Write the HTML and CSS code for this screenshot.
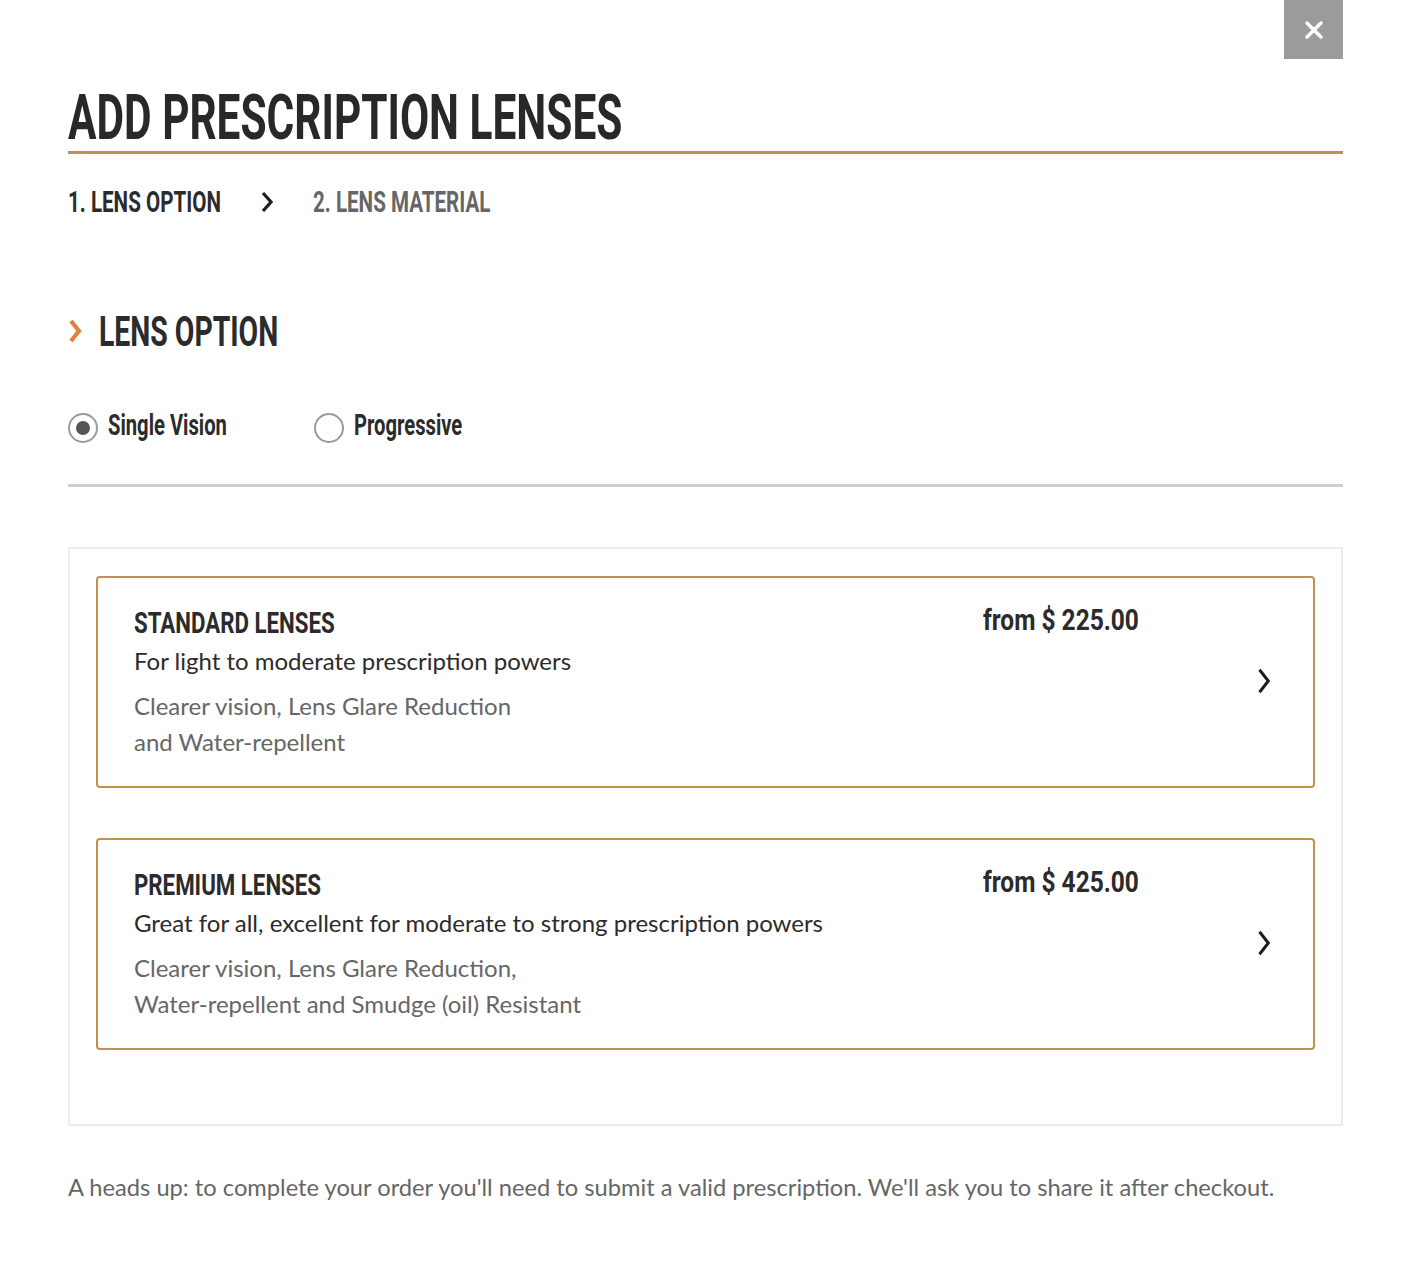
FILE: index.html
```html
<!DOCTYPE html>
<html lang="en">
<head>
<meta charset="utf-8">
<title>Add Prescription Lenses</title>
<link rel="stylesheet" href="styles.css">
</head>
<body>
<div class="modal">
  <button class="close" aria-label="Close">
    <svg width="20" height="20" viewBox="0 0 20 20"><path d="M3 3 L17 17 M17 3 L3 17" stroke="#fff" stroke-width="3.4" stroke-linecap="round"/></svg>
  </button>
  <h1 class="title"><span class="cond">ADD PRESCRIPTION LENSES</span></h1>
  <nav class="steps">
    <span class="step step-1"><span class="cond">1. LENS OPTION</span></span>
    <svg class="step-chev" width="12" height="22" viewBox="0 0 12 22"><path d="M2 2 L10 11 L2 20" fill="none" stroke="#1e1e1e" stroke-width="3.2"/></svg>
    <span class="step"><span class="cond">2. LENS MATERIAL</span></span>
  </nav>
  <h2 class="section">
    <svg class="section-chev" width="14" height="26" viewBox="0 0 14 26"><path d="M3 3 L11 13 L3 23" fill="none" stroke="#e08040" stroke-width="4.2"/></svg>
    <span class="cond">LENS OPTION</span>
  </h2>
  <div class="options">
    <label class="radio"><span class="dot checked"></span><span class="radio-label cond">Single Vision</span></label>
    <label class="radio"><span class="dot"></span><span class="radio-label cond">Progressive</span></label>
  </div>
  <hr class="divider">
  <div class="panel">
    <div class="card">
      <div class="card-body">
        <div class="card-title"><span class="cond">STANDARD LENSES</span></div>
        <div class="card-sub">For light to moderate prescription powers</div>
        <div class="card-feat">Clearer vision, Lens Glare Reduction<br>and Water-repellent</div>
      </div>
      <div class="price"><span class="cond">from $ 225.00</span></div>
      <svg class="card-chev" width="14" height="26" viewBox="0 0 14 26"><path d="M2.5 1.8 L11.3 13 L2.5 24.2" fill="none" stroke="#1e1e1e" stroke-width="3"/></svg>
    </div>
    <div class="card">
      <div class="card-body">
        <div class="card-title"><span class="cond">PREMIUM LENSES</span></div>
        <div class="card-sub">Great for all, excellent for moderate to strong prescription powers</div>
        <div class="card-feat">Clearer vision, Lens Glare Reduction,<br>Water-repellent and Smudge (oil) Resistant</div>
      </div>
      <div class="price"><span class="cond">from $ 425.00</span></div>
      <svg class="card-chev" width="14" height="26" viewBox="0 0 14 26"><path d="M2.5 1.8 L11.3 13 L2.5 24.2" fill="none" stroke="#1e1e1e" stroke-width="3"/></svg>
    </div>
  </div>
  <p class="note">A heads up: to complete your order you'll need to submit a valid prescription. We'll ask you to share it after checkout.</p>
</div>
</body>
</html>
```
FILE: styles.css
```css
* { box-sizing: border-box; }
html, body { margin: 0; padding: 0; background: #fff; }
body { font-family: Lato, "Open Sans", sans-serif; color: #333; }

.modal {
  position: relative;
  width: 1407px;
  padding: 0 64px 0 68px;
}

.close {
  position: absolute;
  top: 0;
  right: 64px;
  width: 59px;
  height: 59px;
  border: 0;
  padding: 0;
  background: #9b9b9b;
  display: flex;
  align-items: center;
  justify-content: center;
}

.title, .steps, .section, .radio-label, .card-title, .price {
  font-family: Roboto, "Liberation Sans", sans-serif;
  font-weight: 700;
}

/* condensed display face: a regular sans squeezed horizontally */
.cond {
  display: inline-block;
  white-space: nowrap;
  transform: scaleX(var(--sx, 0.69));
  transform-origin: left center;
}

.title {
  margin: 0;
  padding-top: 86px;
  padding-bottom: 1px;
  font-size: 63px;
  line-height: 64px;
  color: #282828;
  border-bottom: 3px solid #c0904f;
  white-space: nowrap;
  --sx: 0.673;
}

.steps {
  display: flex;
  align-items: center;
  margin-top: 31px;
  font-size: 29px;
  line-height: 34px;
  color: #666;
  --sx: 0.71;
}
.step-1 { width: 193px; color: #2b2b2b; }
.step-chev { margin-right: 40px; }

.section {
  display: flex;
  align-items: center;
  margin: 89px 0 0;
  font-size: 43px;
  line-height: 46px;
  color: #2b2b2b;
  --sx: 0.66;
}
.section-chev { margin-right: 17px; }

.options {
  display: flex;
  margin-top: 50px;
  height: 48px;
  align-items: center;
}
.radio { display: flex; align-items: center; width: 246px; }
.dot {
  flex: none;
  width: 30px; height: 30px;
  border: 2px solid #9a9a9a;
  border-radius: 50%;
  display: flex; align-items: center; justify-content: center;
  margin-right: 10px;
}
.dot.checked::after {
  content: "";
  width: 14px; height: 14px;
  border-radius: 50%;
  background: #555;
}
.radio-label { font-size: 30px; color: #2b2b2b; margin-top: -8px; --sx: 0.673; }

.divider {
  margin: 32px 0 0;
  border: 0;
  height: 3px;
  background: #cfcfcf;
}

.panel {
  margin-top: 60px;
  border: 2px solid #ececec;
  padding: 27px 26px 74px;
  display: flex;
  flex-direction: column;
  gap: 50px;
}

.card {
  position: relative;
  display: flex;
  border: 2px solid #c0904f;
  border-radius: 4px;
  height: 212px;
  padding: 25px 36px 0;
}
.card-body { width: 849px; }
.card-title { font-size: 30px; line-height: 40px; color: #2b2b2b; --sx: 0.742; }
.card-sub { font-size: 24px; line-height: 30px; color: #2b2b2b; margin-top: 3px; }
.card-feat { font-size: 24px; line-height: 36px; color: #666; margin-top: 12px; }
.price { font-size: 30px; line-height: 34px; color: #2b2b2b; --sx: 0.816; }
.card-chev { position: absolute; right: 42px; top: 90px; }

.note {
  margin: 46px 0 0;
  font-size: 23.7px;
  line-height: 30px;
  color: #666;
}
```
